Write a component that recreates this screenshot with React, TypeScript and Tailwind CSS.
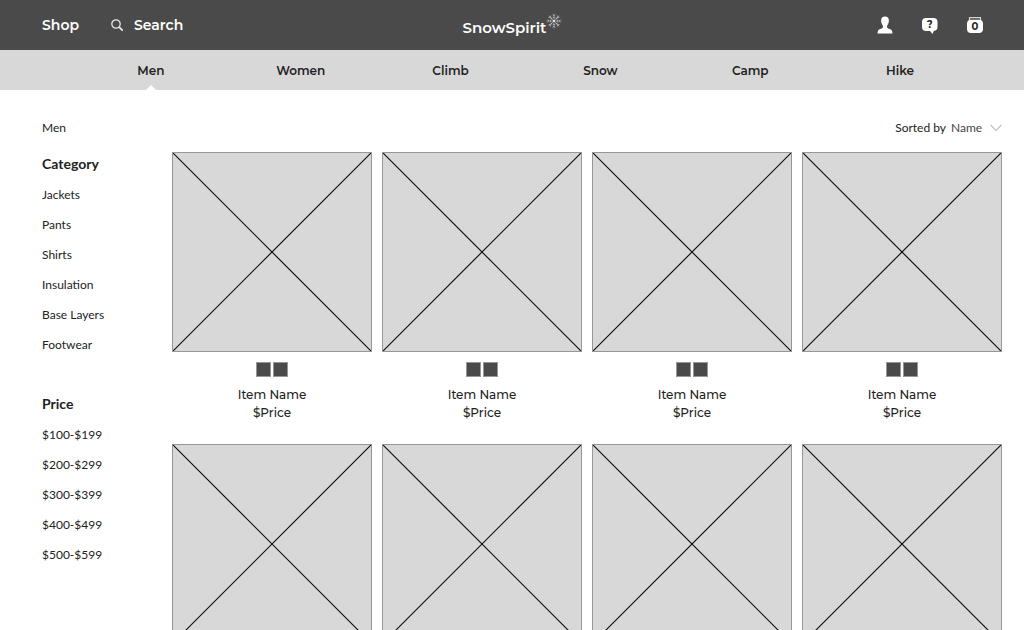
import React from "react";

const sections = ["Men", "Women", "Climb", "Snow", "Camp", "Hike"];
const categories = ["Jackets", "Pants", "Shirts", "Insulation", "Base Layers", "Footwear"];
const prices = ["$100-$199", "$200-$299", "$300-$399", "$400-$499", "$500-$599"];
const items = Array.from({ length: 8 }, (_, i) => i);

function SearchIcon() {
  return (
    <svg width="12" height="12" viewBox="0 0 12 12" fill="none" stroke="#e6e6e6" aria-hidden="true">
      <circle cx="5" cy="5" r="4.2" strokeWidth="1.3" />
      <path d="M8.2 8.2 11.2 11.2" strokeWidth="1.8" strokeLinecap="round" />
    </svg>
  );
}

function Snowflake() {
  const arms = [0, 45, 90, 135, 180, 225, 270, 315];
  return (
    <svg width="16" height="16" viewBox="-8 -8 16 16" fill="none" stroke="#c4c4c4" strokeWidth="0.6" aria-hidden="true">
      {arms.map((angle) => (
        <path key={angle} transform={`rotate(${angle})`} d="M0 0V-7.4M-1.5-6.4 0-5 1.5-6.4M-1.2-4.200 0-3 1.2-4.200" />
      ))}
      <circle r="0.9" fill="#fff" stroke="none" />
    </svg>
  );
}

function PersonIcon() {
  return (
    <svg width="16" height="18" viewBox="0 0 16 18" fill="#fff" aria-hidden="true">
      <path d="M8 .5C5.6.5 4.1 2 4.1 4.6c0 1.800.6 3.500 1.500 4.600.5.7.5 1.600.2 2.200-.3.700-1.200 1.100-2.500 1.500C1.600 13.400.5 14.400.5 17.500h15c0-3.100-1.100-4.100-2.800-4.600-1.300-.4-2.200-.8-2.500-1.500-.3-.6-.3-1.500.2-2.200.9-1.100 1.500-2.800 1.500-4.600C11.900 2 10.400.5 8 .5Z" />
    </svg>
  );
}

function HelpIcon() {
  return (
    <svg width="16" height="18" viewBox="0 -2 16 18" aria-hidden="true">
      <path d="M4 0h7.500q4 0 4 4v4.800q0 3.800-3.500 4L10.500 16 8 13H4q-4 0-4-4V4q0-4 4-4Z" fill="#fff" />
      <text x="7.700" y="10" textAnchor="middle" fontSize="10" fontWeight="700" fill="#222" className="font-['Montserrat','Inter',sans-serif]">?</text>
    </svg>
  );
}

function BagIcon() {
  return (
    <svg width="16" height="16" viewBox="0 0 16 16" aria-hidden="true">
      <path d="M2.500 4V.6h11V4" fill="none" stroke="#d5d5d5" strokeWidth="1.200" />
      <path d="M4 2.800h8q4 0 4 4V12q0 4-4 4H4q-4 0-4-4V6.800q0-4 4-4Z" fill="#fff" />
      <text x="8" y="13" textAnchor="middle" fontSize="10" fontWeight="700" fill="#222" className="font-['Montserrat','Inter',sans-serif]">0</text>
    </svg>
  );
}

function FilterGroup({ title, options }: { title: string; options: string[] }) {
  return (
    <section>
      <h2 className="text-sm leading-5 font-bold">{title}</h2>
      <ul className="pt-1.5">
        {options.map((option) => (
          <li key={option} className="text-xs leading-[30px]">
            <a href="#">{option}</a>
          </li>
        ))}
      </ul>
    </section>
  );
}

function ProductCard() {
  return (
    <article className="flex flex-col items-center text-xs leading-[18px] font-medium font-['Montserrat','Inter',sans-serif]">
      <svg viewBox="0 0 200 200" className="aspect-square w-full border border-[#979797] bg-[#d8d8d8]" preserveAspectRatio="none" role="img" aria-label="Item photo">
        <path d="M0 0 200 200M200 0 0 200" stroke="#111" strokeWidth="1.200" />
      </svg>
      <div className="flex gap-0.5 pt-2.5 pb-[9px]">
        <button type="button" aria-label="First colour" className="size-[15px] border border-[#979797] bg-[#4a4a4a]" />
        <button type="button" aria-label="Second colour" className="size-[15px] border border-[#979797] bg-[#4a4a4a]" />
      </div>
      <h3>Item Name</h3>
      <p>$Price</p>
    </article>
  );
}

export default function App() {
  return (
    <div className="min-h-screen bg-white text-[#222] font-['Lato',sans-serif]">
      <header className="font-['Montserrat','Inter',sans-serif]">
        <div className="grid h-[50px] grid-cols-[1fr_auto_1fr] items-center bg-[#4a4a4a] pr-[41px] pl-[42px] text-sm font-semibold text-white">
          <div className="flex items-center gap-8">
            <a href="#">Shop</a>
            <button type="button" className="flex items-center gap-[11px]">
              <SearchIcon />
              Search
            </button>
          </div>
          <a href="#" className="flex items-start text-[15px] leading-5">
            <span className="pt-[5px]">SnowSpirit</span>
            <Snowflake />
          </a>
          <div className="flex items-center justify-end gap-[29px]">
            <button type="button" aria-label="Account"><PersonIcon /></button>
            <button type="button" aria-label="Help"><HelpIcon /></button>
            <button type="button" aria-label="Bag"><BagIcon /></button>
          </div>
        </div>
        <nav className="grid h-10 grid-cols-6 bg-[#d8d8d8] pr-[49px] pl-[76px] text-xs font-semibold">
          {sections.map((section) => (
            <a key={section} href="#" className="relative flex items-center justify-center pt-0.5">
              {section}
              {section === "Men" && (
                <svg width="10" height="5" viewBox="0 0 10 5" className="absolute bottom-0" aria-hidden="true">
                  <path d="M0 5 5 0 10 5Z" fill="#fff" />
                </svg>
              )}
            </a>
          ))}
        </nav>
      </header>
      <div className="flex pr-[22px] pl-[42px]">
        <aside className="flex w-[130px] shrink-0 flex-col pt-7">
          <p className="pb-4 text-xs leading-5">Men</p>
          <div className="flex flex-col gap-[34px]">
            <FilterGroup title="Category" options={categories} />
            <FilterGroup title="Price" options={prices} />
          </div>
        </aside>
        <main className="flex-1 pt-7">
          <div className="flex items-center justify-end gap-[5px] pb-3.5 text-xs leading-5">
            <label htmlFor="sort">Sorted by</label>
            <div className="relative flex items-center">
              <select id="sort" className="w-[51px] appearance-none bg-transparent text-[#444]">
                <option>Name</option>
                <option>Price</option>
              </select>
              <svg width="12" height="8" viewBox="0 0 12 8" fill="none" stroke="#979797" className="pointer-events-none absolute right-0" aria-hidden="true">
                <path d="M.5 1 6 6.500 11.500 1" />
              </svg>
            </div>
          </div>
          <div className="grid grid-cols-4 gap-x-2.5 gap-y-[22px]">
            {items.map((item) => (
              <ProductCard key={item} />
            ))}
          </div>
        </main>
      </div>
    </div>
  );
}
